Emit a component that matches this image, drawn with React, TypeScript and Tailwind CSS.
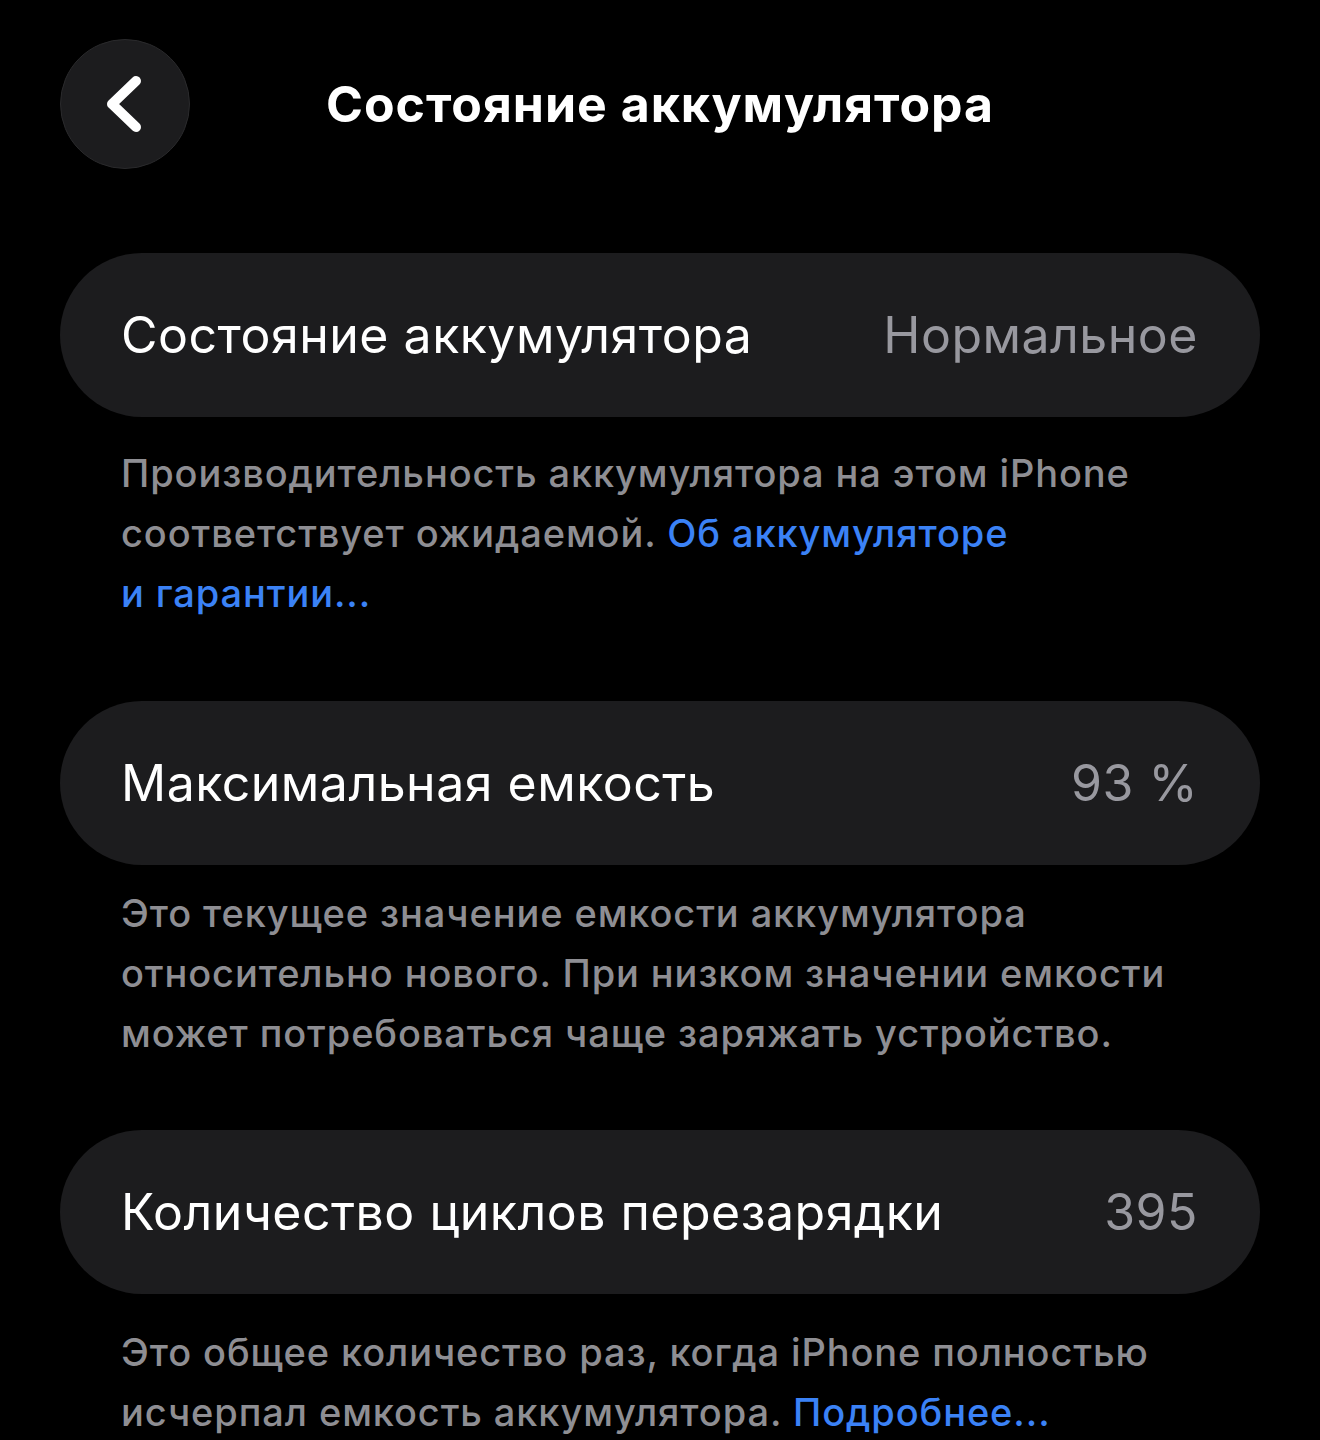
import type { ReactNode } from 'react';

type Row = {
  label: string;
  value: string;
  note: ReactNode;
  cardGap: string;
  noteGap: string;
};

const Link = ({ children }: { children: ReactNode }) => (
  <span className="text-[#3b82f6]">{children}</span>
);

const ROWS: Row[] = [
  {
    label: 'Состояние аккумулятора',
    value: 'Нормальное',
    cardGap: 'mt-0',
    noteGap: 'mt-[26px]',
    note: (
      <>
        Производительность аккумулятора на этом iPhone
        <br />
        соответствует ожидаемой. <Link>Об аккумуляторе</Link>
        <br />
        <Link>и гарантии...</Link>
      </>
    ),
  },
  {
    label: 'Максимальная емкость',
    value: '93 %',
    cardGap: 'mt-[78px]',
    noteGap: 'mt-[18px]',
    note: (
      <>
        Это текущее значение емкости аккумулятора
        <br />
        относительно нового. При низком значении емкости
        <br />
        может потребоваться чаще заряжать устройство.
      </>
    ),
  },
  {
    label: 'Количество циклов перезарядки',
    value: '395',
    cardGap: 'mt-[67px]',
    noteGap: 'mt-[28px]',
    note: (
      <>
        Это общее количество раз, когда iPhone полностью
        <br />
        исчерпал емкость аккумулятора. <Link>Подробнее...</Link>
      </>
    ),
  },
];

function BackButton() {
  return (
    <button
      type="button"
      className="w-[130px] h-[130px] rounded-full bg-[#1c1c1e] border border-[#2a2a2c] flex items-center justify-center"
      aria-label="Назад"
    >
      <svg width="44" height="64" viewBox="0 0 44 64" fill="none" className="-ml-[4px]">
        <path d="M35 9 L11 32 L35 55" stroke="white" strokeWidth="10" strokeLinecap="round" strokeLinejoin="round" />
      </svg>
    </button>
  );
}

export default function App() {
  return (
    <div
      className="w-[1320px] h-[1440px] bg-black text-white overflow-hidden"
      style={{ fontFamily: 'Inter, "Noto Sans", sans-serif' }}
    >
      <header className="relative h-[208px] px-[60px] pt-[39px]">
        <BackButton />
        <h1 className="absolute left-0 right-0 top-[74px] text-center text-[50px] leading-[60px] font-bold tracking-[1px]">
          Состояние аккумулятора
        </h1>
      </header>

      <main className="px-[60px] pt-[45px] flex flex-col">
        {ROWS.map((row) => (
          <section key={row.label} className={row.cardGap}>
            <div className="h-[164px] rounded-full bg-[#1c1c1e] flex items-center justify-between pl-[61px] pr-[62px]">
              <span className="text-[50px] tracking-[0.5px]">{row.label}</span>
              <span className="text-[50px] tracking-[0.5px] text-[#98989f]">{row.value}</span>
            </div>
            <p
              className={`${row.noteGap} pl-[61px] text-[38px] leading-[60px] font-medium text-[#8e8e93] tracking-[0.9px]`}
            >
              {row.note}
            </p>
          </section>
        ))}
      </main>
    </div>
  );
}
